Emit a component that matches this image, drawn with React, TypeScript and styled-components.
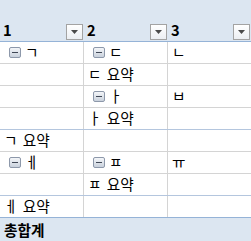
import React from "react";
import styled, { createGlobalStyle } from "styled-components";

const Global = createGlobalStyle`
  *, *::before, *::after { box-sizing: border-box; }
  html, body { margin: 0; padding: 0; background: #ffffff; }
  body {
    font-family: "Noto Sans CJK KR", "Noto Sans", sans-serif;
    font-size: 14.67px;
    color: #000000;
  }
`;

const Sheet = styled.div`
  width: 251px;
  height: 241px;
  display: flex;
  flex-direction: column;
`;

const HeaderRow = styled.div`
  display: grid;
  grid-template-columns: 84px 84px 83px;
  height: 42px;
  background: #dce6f1;
  border-bottom: 1px solid #95b3d7;
`;

const HeaderCell = styled.div`
  display: flex;
  align-items: flex-end;
  justify-content: space-between;
  padding: 0 1px 1px 3px;
`;

const HeaderLabel = styled.span`
  font-weight: 700;
  line-height: 18px;
  padding-bottom: 1px;
`;

const FilterButton = styled.span`
  width: 17px;
  height: 16px;
  border: 1px solid #a3a3a3;
  background: linear-gradient(#ffffff, #eceff3);
  display: flex;
  align-items: center;
  justify-content: center;
`;

const Row = styled.div<{ $line: string }>`
  display: grid;
  grid-template-columns: 84px 84px 83px;
  height: 22px;
  border-top: 1px solid ${(p) => p.$line};
  &:first-of-type { border-top: none; height: 21px; }
`;

const Cell = styled.div<{ $last?: boolean; $indent?: boolean }>`
  display: flex;
  align-items: flex-start;
  gap: 4px;
  padding-left: ${(p) => (p.$indent ? "9px" : "4px")};
  border-right: ${(p) => (p.$last ? "none" : "1px solid #d4d4d4")};
  white-space: nowrap;
`;

const Text = styled.span`
  line-height: 19px;
  word-spacing: 2px;
`;

const Toggle = styled.span`
  position: relative;
  flex: none;
  margin-top: 5px;
  width: 12px;
  height: 11px;
  border: 1px solid #8d98aa;
  border-radius: 2px;
  background: linear-gradient(#f4f6f9, #c9d1dc);
  &::after {
    content: "";
    position: absolute;
    left: 2px;
    right: 2px;
    top: 4px;
    height: 1px;
    background: #404856;
  }
`;

const TotalRow = styled.div`
  flex: 1;
  display: flex;
  align-items: center;
  padding-left: 4px;
  background: #dce6f1;
  border-top: 1px solid #95b3d7;
  font-weight: 700;
  line-height: 23px;
`;

const Body = styled.div`
  display: flex;
  flex-direction: column;
`;

type CellData = { text?: string; toggle?: boolean };
type RowData = { line: string; cells: CellData[] };

const GRID = "#d4d4d4";
const SUB = "#b4c6de";

const rows: RowData[] = [
  { line: GRID, cells: [{ text: "ㄱ", toggle: true }, { text: "ㄷ", toggle: true }, { text: "ㄴ" }] },
  { line: GRID, cells: [{}, { text: "ㄷ 요약" }, {}] },
  { line: GRID, cells: [{}, { text: "ㅏ", toggle: true }, { text: "ㅂ" }] },
  { line: GRID, cells: [{}, { text: "ㅏ 요약" }, {}] },
  { line: SUB, cells: [{ text: "ㄱ 요약" }, {}, {}] },
  { line: GRID, cells: [{ text: "ㅔ", toggle: true }, { text: "ㅍ", toggle: true }, { text: "ㅠ" }] },
  { line: GRID, cells: [{}, { text: "ㅍ 요약" }, {}] },
  { line: SUB, cells: [{ text: "ㅔ 요약" }, {}, {}] },
];

const Caret = () => (
  <svg width="7" height="4" viewBox="0 0 7 4">
    <path d="M0 0H7L3.5 4Z" fill="#4a4a4a" />
  </svg>
);

export default function App() {
  return (
    <>
      <Global />
      <Sheet>
        <HeaderRow>
          {["1", "2", "3"].map((h) => (
            <HeaderCell key={h}>
              <HeaderLabel>{h}</HeaderLabel>
              <FilterButton>
                <Caret />
              </FilterButton>
            </HeaderCell>
          ))}
        </HeaderRow>
        <Body>
          {rows.map((r, i) => (
            <Row key={i} $line={r.line}>
              {r.cells.map((c, j) => (
                <Cell key={j} $last={j === 2} $indent={c.toggle}>
                  {c.toggle && <Toggle />}
                  {c.text && <Text>{c.text}</Text>}
                </Cell>
              ))}
            </Row>
          ))}
        </Body>
        <TotalRow>총합계</TotalRow>
      </Sheet>
    </>
  );
}
